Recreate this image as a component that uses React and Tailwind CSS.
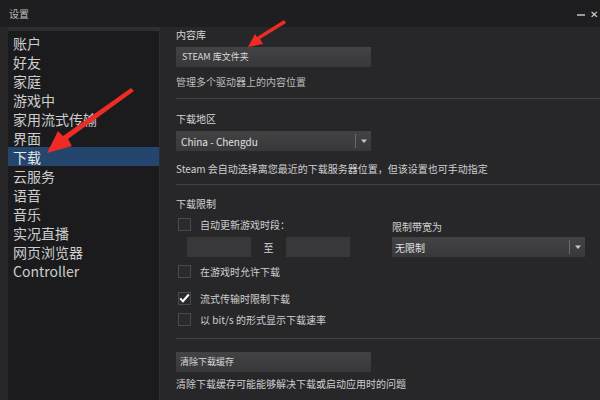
import React from "react";

const items = ["账户", "好友", "家庭", "游戏中", "家用流式传输", "界面", "下载", "云服务", "语音", "音乐", "实况直播", "网页浏览器", "Controller"];

function Check({ checked }) {
  return (
    <div className="w-[13px] h-[13px] border border-[#4a4a4e] bg-[#2a2a2d] flex items-center justify-center shrink-0">
      {checked && (
        <svg width="14" height="12" viewBox="0 0 14 12" className="-mt-[1px]">
          <path d="M1.5 6.5 L5 10 L12.5 1.5" stroke="#ffffff" strokeWidth="2.6" fill="none" />
        </svg>
      )}
    </div>
  );
}

function Arrow() {
  return (
    <svg width="8" height="8" viewBox="0 0 8 8">
      <path d="M1 2.5 L7 2.5 L4 6 Z" fill="#c8c8c8" />
    </svg>
  );
}

export default function App() {
  return (
    <div
      className="relative w-[600px] h-[400px] overflow-hidden bg-[#27272a] text-[#c6c6c6] flex flex-col"
      style={{ fontFamily: '"Noto Sans CJK SC", "Liberation Sans", sans-serif' }}
    >
      <div className="h-[27px] bg-[#1e1e21] flex items-center justify-between pl-[9px] pr-[2px] shrink-0">
        <span className="text-[10px] text-[#bdbdbd]">设置</span>
        <div className="flex items-center gap-[5px]">
          <div className="w-[8px] h-[2px] bg-[#9a9a9a] mt-[3px]" />
          <span className="text-[10px] text-[#ddd] leading-none">✕</span>
        </div>
      </div>
      <div className="flex flex-1 min-h-0">
        <div className="ml-[8px] w-[152px] bg-[#1b1b1e] flex flex-col shrink-0 border-r border-[#2e2e31]">
          <div className="h-[4px] bg-[#2e2e32]" />
          <div className="h-[2px]" />
          {items.map((it) => (
            <div
              key={it}
              className={
                "h-[19px] flex items-center pl-[5px] text-[14px] leading-none " +
                (it === "下载" ? "bg-[#24466e] text-[#e6e6e6]" : "text-[#cdcdcd]")
              }
            >
              {it}
            </div>
          ))}
        </div>
        <div className="flex-1 pl-[16px] flex flex-col text-[10px]">
          <div className="h-[1px]" />
          <div className="h-[13px] flex items-center text-[#d6d6d6]">内容库</div>
          <div className="mt-[6px] w-[195px] h-[20px] bg-gradient-to-b from-[#434346] to-[#38383b] flex items-center pl-[6px] text-[9px] text-[#d8d8d8]">
            STEAM 库文件夹
          </div>
          <div className="mt-[8px] h-[12px] flex items-center text-[#bcbcbc]">管理多个驱动器上的内容位置</div>
          <div className="mt-[11px] h-[1px] bg-[#414144]" />
          <div className="mt-[13px] h-[13px] flex items-center text-[#d6d6d6]">下载地区</div>
          <div className="mt-[6px] w-[195px] h-[20px] bg-gradient-to-b from-[#434346] to-[#38383b] flex items-center text-[#e0e0e0]">
            <span className="flex-1 pl-[5px] text-[10px]">China - Chengdu</span>
            <div className="w-[1px] h-[14px] bg-[#6a6a6d]" />
            <div className="w-[15px] flex items-center justify-center"><Arrow /></div>
          </div>
          <div className="mt-[11px] h-[12px] flex items-center text-[#d0d0d0] whitespace-nowrap">
            Steam 会自动选择离您最近的下载服务器位置，但该设置也可手动指定
          </div>
          <div className="mt-[10px] h-[1px] bg-[#414144]" />
          <div className="mt-[12px] h-[13px] flex items-center text-[#d6d6d6]">下载限制</div>
          <div className="mt-[7px] flex">
            <div className="w-[216px] flex flex-col">
              <div className="flex items-center gap-[9px] pl-[2px] h-[14px]">
                <Check />
                <span className="text-[#cfcfcf]">自动更新游戏时段：</span>
              </div>
              <div className="mt-[6px] flex items-center pl-[11px]">
                <div className="w-[64px] h-[20px] bg-[#38383b]" />
                <span className="w-[35px] text-center text-[#d6d6d6]">至</span>
                <div className="w-[64px] h-[20px] bg-[#38383b]" />
              </div>
            </div>
            <div className="flex flex-col">
              <div className="h-[14px] flex items-center mt-[2px] text-[#cfcfcf]">限制带宽为</div>
              <div className="mt-[4px] w-[193px] h-[20px] bg-gradient-to-b from-[#434346] to-[#38383b] flex items-center text-[#e0e0e0]">
                <span className="flex-1 pl-[3px]">无限制</span>
                <div className="w-[1px] h-[14px] bg-[#6a6a6d]" />
                <div className="w-[15px] flex items-center justify-center"><Arrow /></div>
              </div>
            </div>
          </div>
          <div className="mt-[7px] flex items-center gap-[9px] pl-[2px] h-[14px]">
            <Check />
            <span className="text-[#cfcfcf]">在游戏时允许下载</span>
          </div>
          <div className="mt-[13px] flex items-center gap-[9px] pl-[2px] h-[14px]">
            <Check checked />
            <span className="text-[#cfcfcf]">流式传输时限制下载</span>
          </div>
          <div className="mt-[7px] flex items-center gap-[9px] pl-[2px] h-[14px]">
            <Check />
            <span className="text-[#cfcfcf]">以 bit/s 的形式显示下载速率</span>
          </div>
          <div className="mt-[12px] h-[1px] bg-[#414144]" />
          <div className="mt-[13px] w-[195px] h-[20px] bg-gradient-to-b from-[#434346] to-[#38383b] flex items-center pl-[4px] text-[9px] text-[#d8d8d8]">
            清除下载缓存
          </div>
          <div className="mt-[5px] h-[12px] flex items-center text-[#cfcfcf]">清除下载缓存可能能够解决下载或启动应用时的问题</div>
        </div>
      </div>
      <svg className="absolute left-0 top-0 pointer-events-none" width="600" height="400" viewBox="0 0 600 400">
        <path d="M131 88 L134 91 L68 139 L72 146 L47 153 L58 131 L63 136 Z" fill="#ee2b25" />
        <path d="M284 20 L286 23 L260 39 L263 44 L248 47 L255 34 L257 37 Z" fill="#ee2b25" />
      </svg>
    </div>
  );
}
